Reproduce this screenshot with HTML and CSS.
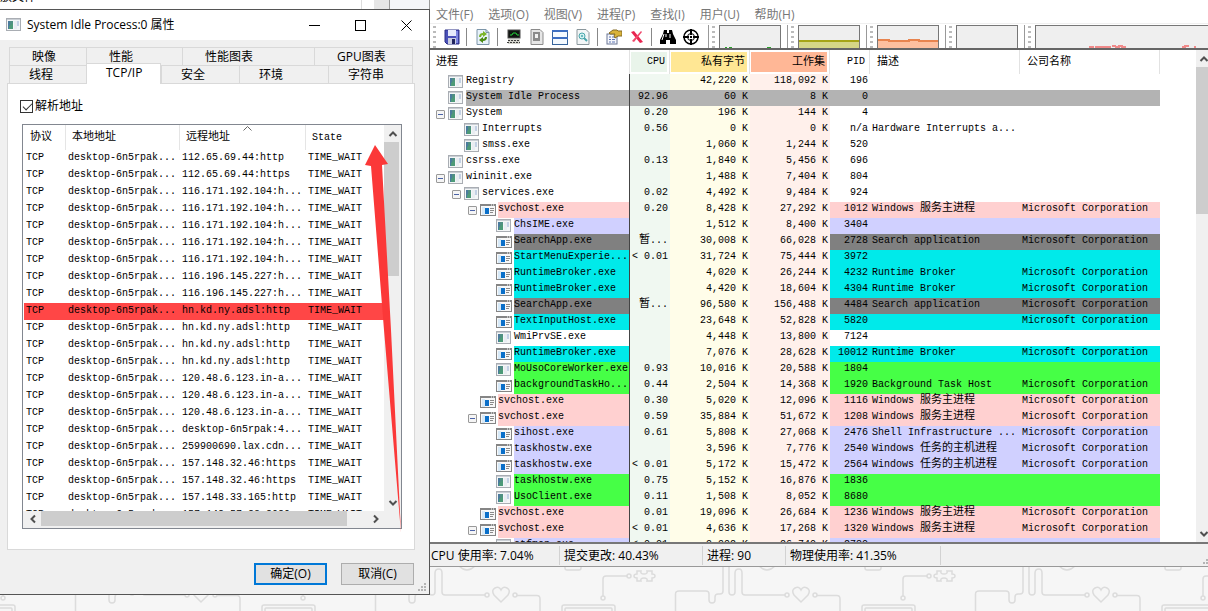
FILE: index.html
```html
<!DOCTYPE html>
<html lang="zh-CN">
<head>
<meta charset="utf-8">
<title>Process Explorer</title>
<link rel="stylesheet" href="styles.css">
</head>
<body>
<svg class="defs" aria-hidden="true">
  <symbol id="app" viewBox="0 0 16 14">
    <rect x=".5" y=".5" width="14" height="12" fill="#f4f6f7" stroke="#a9adb3"/>
    <path d="M1 1.500h13" stroke="#c9ced4"/>
    <rect x="2" y="3" width="5" height="8" fill="#4f8f83"/>
    <path d="M2 3h2v8H2z" fill="#4a7b9c"/>
    <path d="M3 8l4-3v6H3z" fill="#4d9a78"/>
    <rect x="8" y="3" width="3" height="8" fill="#e9edf2"/>
    <rect x="11" y="3" width="2" height="5" fill="#c3d1e4"/>
  </symbol>
  <symbol id="win" viewBox="0 0 16 14">
    <rect x=".5" y="1.500" width="15" height="11" fill="#f8f8f8" stroke="#858585"/>
    <path d="M0 2h16" stroke="#858585" stroke-width="2"/>
    <path d="M11 2h1m1 0h1" stroke="#fff"/>
    <path d="M2 4h3v8H2z" fill="#d6e9f8"/>
    <rect x="5" y="5" width="4" height="6" fill="#0a6fc9"/>
    <path d="M10 5.500h4M10 7.500h4M10 9.500h3" stroke="#8a8a8a"/>
  </symbol>
  <symbol id="up" viewBox="0 0 10 8"><path d="M1.500 6L5 2.500 8.500 6" fill="none" stroke="#505050" stroke-width="2"/></symbol>
  <symbol id="down" viewBox="0 0 10 8"><path d="M1.500 2L5 5.500 8.500 2" fill="none" stroke="#505050" stroke-width="2"/></symbol>
  <symbol id="left" viewBox="0 0 8 10"><path d="M6 1.500L2.500 5 6 8.500" fill="none" stroke="#505050" stroke-width="2"/></symbol>
  <symbol id="right" viewBox="0 0 8 10"><path d="M2 1.500L5.500 5 2 8.500" fill="none" stroke="#505050" stroke-width="2"/></symbol>
  <symbol id="size" viewBox="0 0 9 9"><path d="M6 0h2v2H6zM3 3h2v2H3zM6 3h2v2H6zM0 6h2v2H0zM3 6h2v2H3zM6 6h2v2H6z" fill="#b5b5b5"/></symbol>
</svg>

<div class="desktop">
  <svg class="wallpaper" aria-hidden="true">
    <defs>
      <pattern id="circuit" width="300" height="45" patternUnits="userSpaceOnUse">
        <g fill="none" stroke="#dcdcdc" stroke-width="1.500">
          <path d="M129 0V26Q129 29 132 29Q135 29 135 26V7Q135 3 139 3Q142 3 142 7V26Q142 29 145 29H185"/>
          <circle cx="187" cy="29" r="2"/>
          <path d="M201 36l-7-7q-3-5 1-7 4-2 6 2 2-4 6-2 4 2 1 7z"/>
          <circle cx="215" cy="29" r="2"/>
          <path d="M217 29.500H237Q240 29.500 240 33V45"/>
          <circle cx="3" cy="32" r="2"/><circle cx="29" cy="10" r="2"/>
          <path d="M3 30V13Q3 10 6 10H27"/>
          <path d="M37 5h4q-1 3 3 3t3-3h5v3q3 0 3 2t-3 2v3h-5q1-3-3-3t-3 3h-4v-3q-3 0-3-2t3-2z"/>
          <rect x="-38" y="39" width="53" height="16" rx="2"/><rect x="-35" y="42" width="47" height="12" rx="1"/>
          <rect x="262" y="39" width="53" height="16" rx="2"/><rect x="265" y="42" width="47" height="12" rx="1"/>
          <path d="M75.500 45V28Q75.500 25 79 25H106Q109 25 109 28V34Q109 37 112 37Q115 37 115 34V31Q115 28 118 28H120Q123 28 123 25V0"/>
          <path d="M265 0V2Q265 4 267 4H279Q281 4 281 2V0M159 0Q167 8 175 0"/>
        </g>
      </pattern>
    </defs>
    <rect width="100%" height="45" fill="url(#circuit)"/>
  </svg>

  <div class="behind"><span class="behind-doc">物放文件</span><span class="behind-gap"></span><span class="behind-bar"></span><span class="behind-side"></span></div>

  <main class="explorer">
    <nav class="menu">
      <button>文件(F)</button><button>选项(O)</button><button>视图(V)</button><button>进程(P)</button><button>查找(I)</button><button>用户(U)</button><button>帮助(H)</button>
    </nav>

    <div class="toolbar">
      <div class="band tools">
        <i class="grip"></i>
        <button aria-label="保存"><svg viewBox="0 0 16 16"><path d="M1 1h14v14H3l-2-2z" fill="#4a51b8" stroke="#2b2f86"/><rect x="4" y="1" width="8" height="6" fill="#e6ebfb"/><path d="M12 2h2v12h-2z" fill="#7c86df"/><rect x="4" y="9" width="8" height="6" fill="#c9cde0"/><rect x="8" y="10" width="3" height="5" fill="#20245e"/></svg></button>
        <i class="sep"></i>
        <button aria-label="刷新"><svg viewBox="0 0 16 16"><path d="M2 .5h9l3 3v12H2z" fill="#e8f2fb" stroke="#7c95a8"/><path d="M11 .5v3h3" fill="none" stroke="#7c95a8"/><path d="M4 8q0-4 4-4V2l4 3-4 3V6Q6 6 6 8z" fill="#7bb52b"/><path d="M12 8q0 4-4 4v2l-4-3 4-3v2q2 0 2-2z" fill="#4a8a12"/></svg></button>
        <i class="sep"></i>
        <button aria-label="系统信息"><svg viewBox="0 0 16 16"><rect x="2" y="1" width="12" height="8" fill="#101510" stroke="#4a4a4a"/><path d="M4 6h2l1-2h3l1 2h2" fill="none" stroke="#25d13a"/><path d="M2 10h12v5H2z" fill="#d5d5cd"/><path d="M2 11.500h12M1 13.500h13" stroke="#3e3e3e" stroke-dasharray="2 1"/></svg></button>
        <button aria-label="进程树"><svg viewBox="0 0 16 16"><path d="M2 .5h9l3 3v12H2z" fill="#e6e6e6" stroke="#8b8b8b"/><rect x="4" y="3" width="7" height="9" fill="#8b8b8b"/><rect x="6" y="5" width="3" height="4" fill="#f2f2f2"/></svg></button>
        <button aria-label="下方窗格"><svg viewBox="0 0 16 16"><rect x=".5" y="1.500" width="15" height="14" fill="#f4faff" stroke="#36649c"/><path d="M0 2h16M0 9h16" stroke="#3d6fc1" stroke-width="2"/></svg></button>
        <button aria-label="查看 DLL"><svg viewBox="0 0 16 16"><path d="M2 .5h9l3 3v12H2z" fill="#f3f6f7" stroke="#8b979c"/><circle cx="7" cy="7" r="3" fill="#d4f1f1" stroke="#4aa6ac"/><circle cx="7" cy="7" r="1" fill="#4aa6ac"/><path d="M9 9l3 3" stroke="#4aa6ac" stroke-width="2"/></svg></button>
        <i class="sep"></i>
        <button aria-label="属性"><svg viewBox="0 0 16 16"><rect x="1" y="5" width="10" height="10" fill="#f5f7fc" stroke="#6b7796"/><path d="M3 8h2m1 0h3M3 10.500h2m1 0h3M3 13h2m1 0h3" stroke="#5d74b5"/><path d="M3 4l4-3h4l1 1h4v5h-4L9 9 8 7l1-2H4z" fill="#d9b33b" stroke="#846a24"/></svg></button>
        <button aria-label="终止进程"><svg viewBox="0 0 16 16"><path d="M2 3l3-1 9 11-3 1z" fill="#e8244f"/><path d="M12 2l1 1-8 10-2-1z" fill="#f0486b"/></svg></button>
        <i class="sep"></i>
        <button aria-label="查找句柄"><svg viewBox="0 0 16 16"><path d="M4 1h3v3h2V1h3l1 4 3 6v4h-6v-4H6v4H0v-4l3-6z"/><path d="M4 5l-2 6M10 5v4M6 5v3" stroke="#fff"/></svg></button>
        <button aria-label="查找窗口进程"><svg viewBox="0 0 16 16"><circle cx="8" cy="8" r="7" fill="#fff" stroke="#000" stroke-width="1.500"/><circle cx="8" cy="8" r="3.500" fill="none" stroke="#000"/><path d="M8 0v6M8 10v6M0 8h6M10 8h6M7 8h2" stroke="#000" stroke-width="2"/></svg></button>
      </div>
      <div class="band graph"><i class="grip"></i><svg><path d="M5 21.500h2m2 0h3M47 21.500h4" fill="none" stroke="#2aa02a"/></svg></div>
      <div class="band graph"><i class="grip"></i><svg><path d="M0 15h62v9H0z" fill="#d5d686"/><path d="M0 15h62" stroke="#a5a416" stroke-width="2"/></svg></div>
      <div class="band graph"><i class="grip"></i><svg><path d="M0 14h11v1h20v-1h10v1h21v9H0z" fill="#fdbf9f"/><path d="M0 14h11v1h20v-1h10v1h21" fill="none" stroke="#e8844f" stroke-width="2"/></svg></div>
      <div class="band graph"><i class="grip"></i><svg></svg></div>
      <div class="band graph wide"><i class="grip"></i><svg><path d="M54 22v-1h3v1m3 0v-1h4v1m2 0v-1h3v1m1 0v-1h4v1M76 20h4m-1 1h4v-1h3v1h4M146 21h3v-1h3v1m6 0h2" fill="none" stroke="#f08a8a" stroke-width="2"/></svg></div>
    </div>

    <section class="pane">
      <div class="pane-view">
        <table class="procs">
          <colgroup><col class="c-name"><col class="c-cpu"><col class="c-mem"><col class="c-mem"><col class="c-pid"><col class="c-desc"><col class="c-co"></colgroup>
          <thead><tr><th><span class="zh">进程</span></th><th class="num cpu"><span>CPU</span></th><th class="num priv"><span class="zh">私有字节</span></th><th class="num work"><span class="zh">工作集</span></th><th class="num"><span>PID</span></th><th><span class="zh">描述</span></th><th><span class="zh">公司名称</span></th></tr></thead>
          <tbody>
            <tr><td><div class="node d0"><svg><use href="#app"/></svg><span>Registry</span></div></td><td></td><td>42,220 K</td><td>118,092 K</td><td>196</td><td></td><td></td></tr>
            <tr class="sel"><td><div class="node d0"><svg><use href="#app"/></svg><span>System Idle Process</span></div></td><td>92.96</td><td>60 K</td><td>8 K</td><td>0</td><td></td><td></td></tr>
            <tr><td><div class="node d0"><button aria-label="折叠"></button><svg><use href="#app"/></svg><span>System</span></div></td><td>0.20</td><td>196 K</td><td>144 K</td><td>4</td><td></td><td></td></tr>
            <tr><td><div class="node d1"><svg><use href="#app"/></svg><span>Interrupts</span></div></td><td>0.56</td><td>0 K</td><td>0 K</td><td>n/a</td><td>Hardware Interrupts a...</td><td></td></tr>
            <tr><td><div class="node d1"><svg><use href="#app"/></svg><span>smss.exe</span></div></td><td></td><td>1,060 K</td><td>1,244 K</td><td>520</td><td></td><td></td></tr>
            <tr><td><div class="node d0"><svg><use href="#app"/></svg><span>csrss.exe</span></div></td><td>0.13</td><td>1,840 K</td><td>5,456 K</td><td>696</td><td></td><td></td></tr>
            <tr><td><div class="node d0"><button aria-label="折叠"></button><svg><use href="#app"/></svg><span>wininit.exe</span></div></td><td></td><td>1,488 K</td><td>7,404 K</td><td>804</td><td></td><td></td></tr>
            <tr><td><div class="node d1"><button aria-label="折叠"></button><svg><use href="#app"/></svg><span>services.exe</span></div></td><td>0.02</td><td>4,492 K</td><td>9,484 K</td><td>924</td><td></td><td></td></tr>
            <tr class="svc"><td><div class="node d2"><button aria-label="折叠"></button><svg><use href="#win"/></svg><span>svchost.exe</span></div></td><td>0.20</td><td>8,428 K</td><td>27,292 K</td><td>1012</td><td>Windows <span class="zh">服务主进程</span></td><td>Microsoft Corporation</td></tr>
            <tr class="own"><td><div class="node d3"><svg><use href="#app"/></svg><span>ChsIME.exe</span></div></td><td></td><td>1,512 K</td><td>8,400 K</td><td>3404</td><td></td><td></td></tr>
            <tr class="susp"><td><div class="node d3"><svg><use href="#win"/></svg><span>SearchApp.exe</span></div></td><td><span class="zh">暂</span>...</td><td>30,008 K</td><td>66,028 K</td><td>2728</td><td>Search application</td><td>Microsoft Corporation</td></tr>
            <tr class="imm"><td><div class="node d3"><svg><use href="#win"/></svg><span>StartMenuExperie...</span></div></td><td>&lt; 0.01</td><td>31,724 K</td><td>75,444 K</td><td>3972</td><td></td><td></td></tr>
            <tr class="imm"><td><div class="node d3"><svg><use href="#win"/></svg><span>RuntimeBroker.exe</span></div></td><td></td><td>4,020 K</td><td>26,244 K</td><td>4232</td><td>Runtime Broker</td><td>Microsoft Corporation</td></tr>
            <tr class="imm"><td><div class="node d3"><svg><use href="#win"/></svg><span>RuntimeBroker.exe</span></div></td><td></td><td>4,420 K</td><td>18,604 K</td><td>4304</td><td>Runtime Broker</td><td>Microsoft Corporation</td></tr>
            <tr class="susp"><td><div class="node d3"><svg><use href="#win"/></svg><span>SearchApp.exe</span></div></td><td><span class="zh">暂</span>...</td><td>96,580 K</td><td>156,488 K</td><td>4484</td><td>Search application</td><td>Microsoft Corporation</td></tr>
            <tr class="imm"><td><div class="node d3"><svg><use href="#win"/></svg><span>TextInputHost.exe</span></div></td><td></td><td>23,648 K</td><td>52,828 K</td><td>5820</td><td></td><td>Microsoft Corporation</td></tr>
            <tr><td><div class="node d3"><svg><use href="#app"/></svg><span>WmiPrvSE.exe</span></div></td><td></td><td>4,448 K</td><td>13,800 K</td><td>7124</td><td></td><td></td></tr>
            <tr class="imm"><td><div class="node d3"><svg><use href="#win"/></svg><span>RuntimeBroker.exe</span></div></td><td></td><td>7,076 K</td><td>28,628 K</td><td>10012</td><td>Runtime Broker</td><td>Microsoft Corporation</td></tr>
            <tr class="new"><td><div class="node d3"><svg><use href="#app"/></svg><span>MoUsoCoreWorker.exe</span></div></td><td>0.93</td><td>10,016 K</td><td>20,588 K</td><td>1804</td><td></td><td></td></tr>
            <tr class="new"><td><div class="node d3"><svg><use href="#win"/></svg><span>backgroundTaskHo...</span></div></td><td>0.44</td><td>2,504 K</td><td>14,368 K</td><td>1920</td><td>Background Task Host</td><td>Microsoft Corporation</td></tr>
            <tr class="svc"><td><div class="node d2"><svg><use href="#win"/></svg><span>svchost.exe</span></div></td><td>0.30</td><td>5,020 K</td><td>12,096 K</td><td>1116</td><td>Windows <span class="zh">服务主进程</span></td><td>Microsoft Corporation</td></tr>
            <tr class="svc"><td><div class="node d2"><button aria-label="折叠"></button><svg><use href="#win"/></svg><span>svchost.exe</span></div></td><td>0.59</td><td>35,884 K</td><td>51,672 K</td><td>1208</td><td>Windows <span class="zh">服务主进程</span></td><td>Microsoft Corporation</td></tr>
            <tr class="own"><td><div class="node d3"><svg><use href="#win"/></svg><span>sihost.exe</span></div></td><td>0.61</td><td>5,808 K</td><td>27,068 K</td><td>2476</td><td>Shell Infrastructure ...</td><td>Microsoft Corporation</td></tr>
            <tr class="own"><td><div class="node d3"><svg><use href="#win"/></svg><span>taskhostw.exe</span></div></td><td></td><td>3,596 K</td><td>7,776 K</td><td>2540</td><td>Windows <span class="zh">任务的主机进程</span></td><td>Microsoft Corporation</td></tr>
            <tr class="own"><td><div class="node d3"><svg><use href="#win"/></svg><span>taskhostw.exe</span></div></td><td>&lt; 0.01</td><td>5,172 K</td><td>15,472 K</td><td>2564</td><td>Windows <span class="zh">任务的主机进程</span></td><td>Microsoft Corporation</td></tr>
            <tr class="new"><td><div class="node d3"><svg><use href="#app"/></svg><span>taskhostw.exe</span></div></td><td>0.75</td><td>5,152 K</td><td>16,876 K</td><td>1836</td><td></td><td></td></tr>
            <tr class="new"><td><div class="node d3"><svg><use href="#app"/></svg><span>UsoClient.exe</span></div></td><td>0.11</td><td>1,508 K</td><td>8,052 K</td><td>8680</td><td></td><td></td></tr>
            <tr class="svc"><td><div class="node d2"><svg><use href="#win"/></svg><span>svchost.exe</span></div></td><td>0.01</td><td>19,096 K</td><td>26,684 K</td><td>1236</td><td>Windows <span class="zh">服务主进程</span></td><td>Microsoft Corporation</td></tr>
            <tr class="svc"><td><div class="node d2"><button aria-label="折叠"></button><svg><use href="#win"/></svg><span>svchost.exe</span></div></td><td>&lt; 0.01</td><td>4,636 K</td><td>17,268 K</td><td>1320</td><td>Windows <span class="zh">服务主进程</span></td><td>Microsoft Corporation</td></tr>
            <tr class="own"><td><div class="node d3"><svg><use href="#app"/></svg><span>ctfmon.exe</span></div></td><td>&lt; 0.01</td><td>9,992 K</td><td>26,740 K</td><td>2780</td><td></td><td></td></tr>
          </tbody>
        </table>
      </div>
      <div class="vbar edge"><button aria-label="向上"><svg><use href="#up"/></svg></button><div class="track"><div class="thumb"></div></div><button aria-label="向下"><svg><use href="#down"/></svg></button></div>
    </section>

    <footer class="status">
      <span class="s-cpu">CPU 使用率: 7.04%</span><span class="s-commit">提交更改: 40.43%</span><span class="s-count">进程: 90</span><span class="s-phys">物理使用率: 41.35%</span>
      <svg class="sizer"><use href="#size"/></svg>
    </footer>
  </main>

  <section class="dialog" role="dialog" aria-labelledby="dlg-title">
    <header class="titlebar">
      <svg class="title-icon"><use href="#app"/></svg>
      <h1 id="dlg-title">System Idle Process:0 属性</h1>
      <button aria-label="最小化"><svg viewBox="0 0 11 11"><path d="M0 5.500h11"/></svg></button>
      <button aria-label="最大化"><svg viewBox="0 0 11 11"><rect x=".5" y=".5" width="10" height="10"/></svg></button>
      <button aria-label="关闭"><svg viewBox="0 0 11 11"><path d="M.5.5l10 10M10.500.5l-10 10"/></svg></button>
    </header>
    <div class="sheet">
      <div class="tabs back" role="tablist"><button role="tab">映像</button><button role="tab">性能</button><button role="tab">性能图表</button><button role="tab">GPU图表</button></div>
      <div class="tabs front" role="tablist"><button role="tab">线程</button><button role="tab" class="active" aria-selected="true">TCP/IP</button><button role="tab">安全</button><button role="tab">环境</button><button role="tab">字符串</button></div>
      <div class="page">
        <label class="resolve"><input type="checkbox" checked>解析地址</label>
        <div class="list">
          <div class="list-body">
            <div class="list-view">
              <table class="conns">
                <colgroup><col class="k-proto"><col class="k-local"><col class="k-remote"><col></colgroup>
                <thead><tr><th><span class="zh">协议</span></th><th><span class="zh">本地地址</span></th><th class="sorted"><span class="zh">远程地址</span><svg viewBox="0 0 9 5"><path d="M.5 4.500l4-4 4 4"/></svg></th><th>State</th></tr></thead>
                <tbody>
                  <tr><td>TCP</td><td>desktop-6n5rpak...</td><td>112.65.69.44:http</td><td>TIME_WAIT</td></tr>
                  <tr><td>TCP</td><td>desktop-6n5rpak...</td><td>112.65.69.44:https</td><td>TIME_WAIT</td></tr>
                  <tr><td>TCP</td><td>desktop-6n5rpak...</td><td>116.171.192.104:h...</td><td>TIME_WAIT</td></tr>
                  <tr><td>TCP</td><td>desktop-6n5rpak...</td><td>116.171.192.104:h...</td><td>TIME_WAIT</td></tr>
                  <tr><td>TCP</td><td>desktop-6n5rpak...</td><td>116.171.192.104:h...</td><td>TIME_WAIT</td></tr>
                  <tr><td>TCP</td><td>desktop-6n5rpak...</td><td>116.171.192.104:h...</td><td>TIME_WAIT</td></tr>
                  <tr><td>TCP</td><td>desktop-6n5rpak...</td><td>116.171.192.104:h...</td><td>TIME_WAIT</td></tr>
                  <tr><td>TCP</td><td>desktop-6n5rpak...</td><td>116.196.145.227:h...</td><td>TIME_WAIT</td></tr>
                  <tr><td>TCP</td><td>desktop-6n5rpak...</td><td>116.196.145.227:h...</td><td>TIME_WAIT</td></tr>
                  <tr class="closed"><td>TCP</td><td>desktop-6n5rpak...</td><td>hn.kd.ny.adsl:http</td><td>TIME_WAIT</td></tr>
                  <tr><td>TCP</td><td>desktop-6n5rpak...</td><td>hn.kd.ny.adsl:http</td><td>TIME_WAIT</td></tr>
                  <tr><td>TCP</td><td>desktop-6n5rpak...</td><td>hn.kd.ny.adsl:http</td><td>TIME_WAIT</td></tr>
                  <tr><td>TCP</td><td>desktop-6n5rpak...</td><td>hn.kd.ny.adsl:http</td><td>TIME_WAIT</td></tr>
                  <tr><td>TCP</td><td>desktop-6n5rpak...</td><td>120.48.6.123.in-a...</td><td>TIME_WAIT</td></tr>
                  <tr><td>TCP</td><td>desktop-6n5rpak...</td><td>120.48.6.123.in-a...</td><td>TIME_WAIT</td></tr>
                  <tr><td>TCP</td><td>desktop-6n5rpak...</td><td>120.48.6.123.in-a...</td><td>TIME_WAIT</td></tr>
                  <tr><td>TCP</td><td>desktop-6n5rpak...</td><td>desktop-6n5rpak:4...</td><td>TIME_WAIT</td></tr>
                  <tr><td>TCP</td><td>desktop-6n5rpak...</td><td>259900690.lax.cdn...</td><td>TIME_WAIT</td></tr>
                  <tr><td>TCP</td><td>desktop-6n5rpak...</td><td>157.148.32.46:https</td><td>TIME_WAIT</td></tr>
                  <tr><td>TCP</td><td>desktop-6n5rpak...</td><td>157.148.32.46:https</td><td>TIME_WAIT</td></tr>
                  <tr><td>TCP</td><td>desktop-6n5rpak...</td><td>157.148.33.165:http</td><td>TIME_WAIT</td></tr>
                  <tr><td>TCP</td><td>desktop-6n5rpak...</td><td>157.148.57.23:8080</td><td>TIME_WAIT</td></tr>
                </tbody>
              </table>
            </div>
            <div class="vbar"><button aria-label="向上"><svg><use href="#up"/></svg></button><div class="track"><div class="thumb"></div></div><button aria-label="向下"><svg><use href="#down"/></svg></button></div>
          </div>
          <div class="hbar"><button aria-label="向左"><svg><use href="#left"/></svg></button><div class="track"><div class="thumb"></div></div><button aria-label="向右"><svg><use href="#right"/></svg></button></div>
        </div>
      </div>
      <div class="actions"><button class="default">确定(O)</button><button>取消(C)</button></div>
    </div>
    <svg class="sizer"><use href="#size"/></svg>
  </section>

  <svg class="arrow" viewBox="0 0 38 388" aria-hidden="true"><path d="M11 0L24 19 18 20 21 75 27 185 37 388 20 185 7 21 1 20z" fill="#fb3838"/></svg>
</div>
</body>
</html>
```

FILE: styles.css
```css
* { box-sizing: border-box; }

body {
  margin: 0;
  color: #000;
  font: 12px/16px "Open Sans", "Noto Sans CJK SC", sans-serif;
}

button {
  margin: 0;
  padding: 0;
  border: 0;
  background: none;
  color: inherit;
  font: inherit;
}

svg { display: block; }
.defs { position: absolute; width: 0; height: 0; }

.desktop {
  position: relative;
  height: 100vh;
  overflow: hidden;
  background: #f6f6f6;
}

.wallpaper { position: absolute; left: 0; bottom: 0; width: 100%; height: 45px; }

/* Slice of the windows underneath */
.behind {
  position: absolute;
  top: 0;
  left: 0;
  display: flex;
  width: 430px;
  height: 12px;
  background: #fff;
  overflow: hidden;
}
.behind-doc { flex: 1; border-right: 1px solid #ddd; line-height: 16px; margin-top: -11px; margin-left: -12px; }
.behind-gap { width: 12px; }
.behind-bar { width: 15px; background: #e6e6e6; }
.behind-side { width: 41px; border: solid #9a9a9a; border-width: 0 1px; background: #f4f5f8; }

/* Main window */
.explorer {
  position: absolute;
  inset: 0 0 44px 430px;
  display: flex;
  flex-direction: column;
  background: #fff;
  border-bottom: 1px solid #999;
}

.menu { display: flex; gap: 15px; padding: 7px 6px 0; height: 23px; color: #777; }
.menu button { white-space: nowrap; }

.toolbar {
  display: flex;
  height: 27px;
  padding-top: 1px;
  background: #fff;
  border-top: 1px solid #f0f0f0;
  border-bottom: 2px solid #666;
}
.band { display: flex; align-items: center; padding-left: 3px; border-right: 1px solid #999; }
.tools { width: 279px; }
.tools button { width: 23px; height: 20px; }
.tools button svg { width: 16px; height: 16px; margin: 0 auto; }
.grip {
  width: 3px;
  height: 22px;
  margin-right: 4px;
  background: repeating-linear-gradient(#bbb 0 2px, transparent 2px 5px);
}
.sep { width: 1px; height: 18px; margin: 0 4px 0 3px; background: #888; }
.graph { width: 79px; }
.graph svg { width: 62px; height: 23px; border: 1px solid #777; border-bottom: 0; background: #efefef; }
.graph.wide { flex: 1; border-right: 0; }
.graph.wide svg { flex: 1; border-right: 0; }

.pane { flex: 1; display: flex; min-height: 0; }
.pane-view { flex: 1; overflow: hidden; }

table {
  border-collapse: separate;
  border-spacing: 0;
  table-layout: fixed;
  font: 10px/14px "Liberation Mono", "Noto Sans CJK SC", monospace;
}
th, td { padding: 0 2px; text-align: left; vertical-align: top; white-space: nowrap; font-weight: 400; }
.zh { font-size: 11px; }
td .zh { line-height: 10px; }

.procs { width: 730px; }
.c-name { width: 200px; }
.c-cpu, .c-pid { width: 40px; }
.c-mem { width: 80px; }
.c-desc { width: 150px; }
.c-co { width: 140px; }

.procs th { height: 24px; padding: 2px 2px 2px 1px; border-right: 1px solid #e2e2e2; }
.procs th > span { display: block; height: 20px; padding: 0 2px 0 6px; line-height: 20px; }
.procs th:first-child > span { padding-left: 5px; }
.procs .num { text-align: right; }
.cpu > span { background: #e9f4ea; }
.priv > span { background: #ffe794; }
.work > span { background: #ffb796; }

.procs td { height: 16px; }
.procs td:first-child { padding: 0; border-right: 1px solid #444; }
.procs td:nth-child(n+2):nth-child(-n+5) { text-align: right; }
.procs td:nth-child(2) { background: #f0f8f1; }
.procs td:nth-child(3) { background: #fffde9; }
.procs td:nth-child(4) { background: #fff0eb; }

.node { display: flex; height: 16px; }
.node svg { flex: none; width: 16px; height: 14px; margin: 1px 2px 0 0; }
.node > span { flex: 1; }
.node button {
  flex: none;
  width: 9px;
  height: 9px;
  margin: 4px 3px 0 -12px;
  border: 1px solid #999;
  border-radius: 1px;
  background: linear-gradient(#4b63a7, #4b63a7) center / 5px 1px no-repeat #f5f5f5;
}
.d0 { padding-left: 18px; }
.d1 { padding-left: 34px; }
.d2 { padding-left: 50px; }
.d3 { padding-left: 66px; }

.svc .node > span, .svc td:nth-child(n+5) { background: #ffd0d0; }
.own .node > span, .own td:nth-child(n+5) { background: #d0d0ff; }
.susp .node > span, .susp td:nth-child(n+5) { background: #808080; }
.imm .node > span, .imm td:nth-child(n+5) { background: #00eaea; }
.new .node > span, .new td:nth-child(n+5) { background: #46ff46; }
.procs .sel .node > span, .procs .sel td:nth-child(n+2) { background: #b3b3b3; }

/* Scroll bars */
.vbar { display: flex; flex-direction: column; flex: none; width: 17px; background: #f0f0f0; }
.vbar button { height: 17px; }
.vbar svg { width: 10px; height: 8px; margin: 0 auto; }
.vbar .track { flex: 1; }
.vbar .thumb { width: 15px; height: 38%; background: #cdcdcd; }
.vbar.edge { width: 12px; overflow: hidden; }
.vbar.edge svg { margin: 0 0 0 3px; }
.vbar.edge .thumb { height: 32%; }
.hbar { display: flex; height: 17px; padding: 0 17px 1px 1px; background: #f0f0f0; }
.hbar button { width: 17px; }
.hbar svg { width: 8px; height: 10px; margin: 0 auto; }
.hbar .track { flex: 1; }
.hbar .thumb { width: 94%; height: 15px; background: #cdcdcd; }

.status {
  display: flex;
  flex: none;
  height: 24px;
  padding: 2px 0 1px;
  border-top: 2px solid #777;
  background: #f0f0f0;
  line-height: 20px;
}
.status > span { padding-left: 4px; border-right: 1px solid #d2d2d2; white-space: nowrap; }
.status .s-cpu { width: 130px; padding-left: 1px; }
.s-commit { width: 143px; }
.s-count { width: 83px; }
.s-phys { width: 155px; }
.sizer { width: 9px; height: 9px; }
.status .sizer { margin: auto -4px 0 auto; }

/* Properties window */
.dialog {
  position: absolute;
  top: 9px;
  bottom: 16px;
  left: 0;
  display: flex;
  flex-direction: column;
  width: 430px;
  border: solid #555;
  border-width: 1px 1px 1px 0;
  background: #f0f0f0;
}
.dialog > .sizer { position: absolute; right: 2px; bottom: 2px; }

.titlebar { display: flex; align-items: center; height: 30px; padding-left: 6px; background: #fff; }
.title-icon { width: 16px; height: 14px; margin-right: 5px; }
.titlebar h1 { flex: 1; margin: 0; font-size: 12px; font-weight: 400; }
.titlebar button { width: 46px; height: 30px; }
.titlebar button svg { width: 11px; height: 11px; margin: 0 auto; fill: none; stroke: #000; }

.sheet { flex: 1; display: flex; flex-direction: column; min-height: 0; padding: 7px 14px 9px 7px; }
.tabs { display: grid; margin: 0 2px; height: 18px; }
.back { grid-template-columns: 77fr 96fr 132fr 99fr; }
.front { grid-template-columns: 77fr 75fr 78fr 89fr 85fr; }
.tabs button {
  padding-left: 22px;
  border: solid #d9d9d9;
  border-width: 1px 0 0 1px;
  text-align: left;
  line-height: 17px;
  white-space: nowrap;
}
.front button { padding-left: 19px; }
.tabs button:last-child { border-right-width: 1px; }
.tabs .active {
  z-index: 1;
  margin: -2px 0 -1px;
  padding-bottom: 3px;
  border-right-width: 1px;
  background: #fff;
}
.page {
  flex: 1;
  display: flex;
  flex-direction: column;
  min-height: 0;
  padding: 14px 12px 20px 14px;
  border: 1px solid #d9d9d9;
  background: #fff;
}
.resolve { display: flex; align-items: center; gap: 2px; height: 16px; margin: 0 0 10px -2px; }
.resolve input {
  appearance: none;
  width: 13px;
  height: 13px;
  margin: 0;
  border: 1px solid #333;
  background: #fff;
}
.resolve input:checked::before {
  content: "";
  display: block;
  width: 8px;
  height: 4px;
  margin: 2px 0 0 2px;
  border: solid #333;
  border-width: 0 0 1px 1px;
  transform: rotate(-45deg);
}

.list { flex: 1; display: flex; flex-direction: column; min-height: 0; border: 1px solid #828790; }
.list-body { flex: 1; display: flex; min-height: 0; }
.list-view { flex: 1; padding-left: 1px; overflow: hidden; }
.conns { width: 100%; line-height: 16px; }
.k-proto { width: 42px; }
.k-local { width: 114px; }
.k-remote { width: 126px; }
.conns th { height: 25px; padding: 0 6px; border-right: 1px solid #e5e5e5; line-height: 25px; }
.conns th:last-child { border-right: 0; }
.sorted { position: relative; }
.sorted svg { position: absolute; top: 1px; left: 50%; width: 9px; height: 5px; fill: none; stroke: #666; }
.conns td { height: 17px; }
.closed td { background: #ff4646; }

.actions { display: flex; justify-content: flex-end; gap: 14px; margin: 13px 1px 0 0; }
.actions button { width: 73px; height: 22px; border: 1px solid #adadad; background: #e1e1e1; }
.actions .default { border: 2px solid #0078d7; }

.arrow { position: absolute; top: 145px; left: 364px; width: 38px; height: 388px; }
```
